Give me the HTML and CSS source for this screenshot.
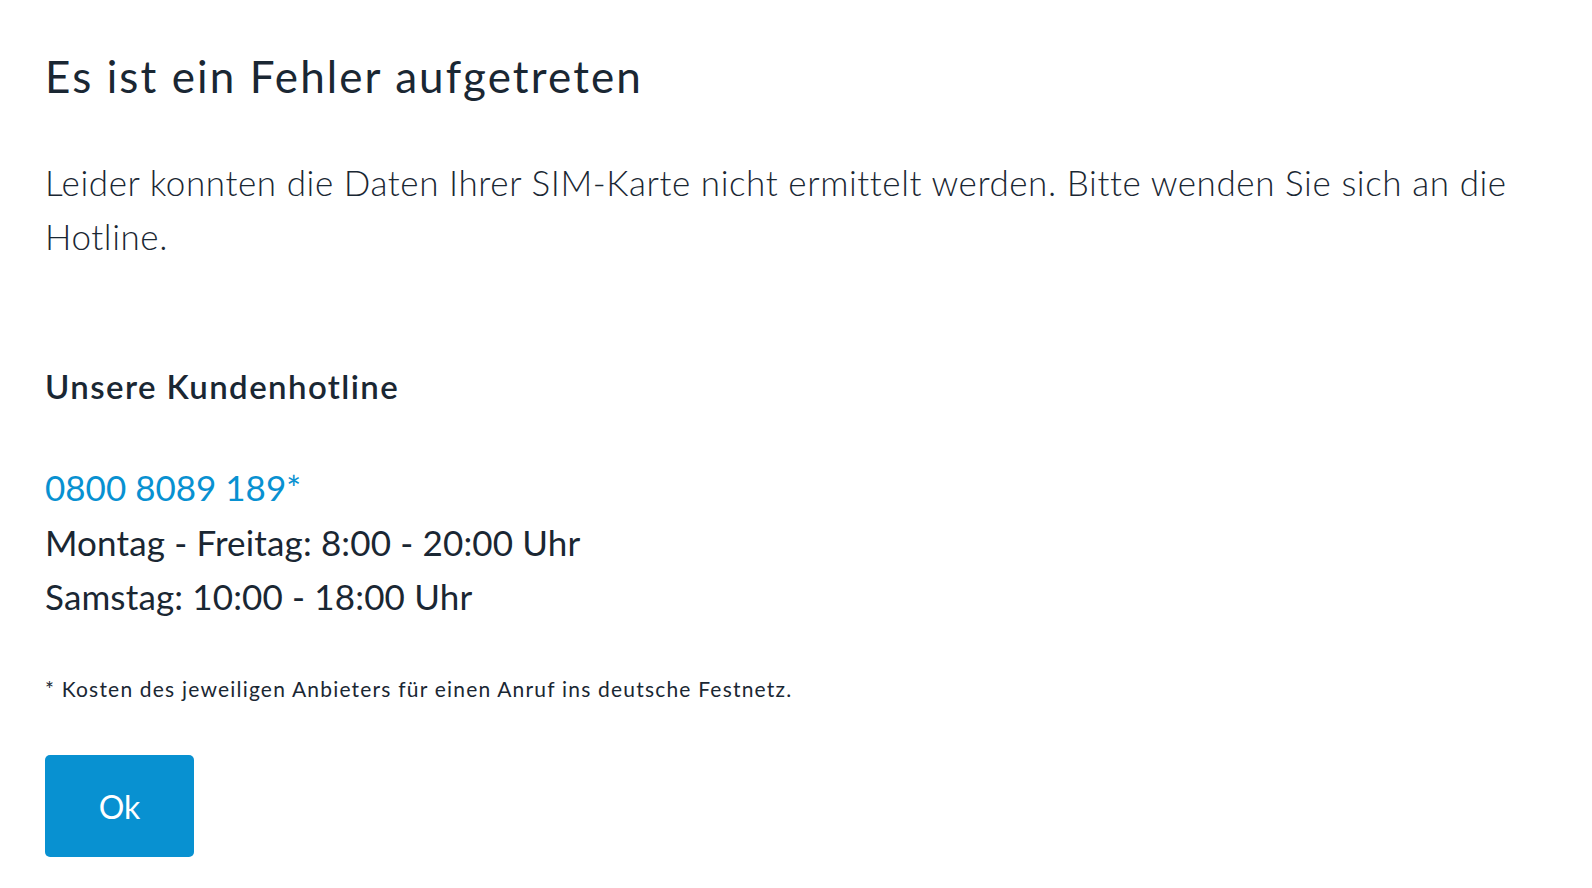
FILE: index.html
```html
<!DOCTYPE html>
<html lang="de">
<head>
<meta charset="utf-8">
<title>Fehler</title>
<link rel="stylesheet" href="styles.css">
</head>
<body>
<main class="dialog">
  <h1 class="title">Es ist ein Fehler aufgetreten</h1>
  <p class="message">Leider konnten die Daten Ihrer SIM-Karte nicht ermittelt werden. Bitte wenden Sie sich an die Hotline.</p>
  <h2 class="subtitle">Unsere Kundenhotline</h2>
  <div class="hotline">
    <a class="phone" href="#">0800 8089 189*</a>
    <div class="hours">Montag - Freitag: 8:00 - 20:00 Uhr</div>
    <div class="hours">Samstag: 10:00 - 18:00 Uhr</div>
  </div>
  <p class="footnote">* Kosten des jeweiligen Anbieters für einen Anruf ins deutsche Festnetz.</p>
  <button class="ok-button" type="button">Ok</button>
</main>
</body>
</html>
```
FILE: styles.css
```css
html, body {
  margin: 0;
  padding: 0;
  background: #ffffff;
}

body {
  font-family: "Lato", "Noto Sans", sans-serif;
  color: #1a2733;
}

.dialog {
  display: flex;
  flex-direction: column;
  align-items: flex-start;
  padding: 48px 45px 0 45px;
}

.title {
  margin: 0;
  font-size: 44px;
  line-height: 56px;
  font-weight: 400;
  letter-spacing: 2.1px;
}

.message {
  margin: 51px 0 0 0;
  font-size: 35px;
  line-height: 54px;
  font-weight: 300;
  letter-spacing: 0.58px;
}

.subtitle {
  margin: 101px 0 0 0;
  font-size: 33px;
  line-height: 44px;
  font-weight: 600;
  letter-spacing: 1.4px;
}

.hotline {
  margin-top: 52px;
  display: flex;
  flex-direction: column;
  font-size: 35px;
  line-height: 54px;
  font-weight: 400;
}

.phone {
  color: #0891d1;
  text-decoration: none;
}

.hours {
  letter-spacing: 0.15px;
  margin-top: 1px;
  margin-bottom: -1px;
}

.footnote {
  margin: 52px 0 0 0;
  font-size: 21px;
  line-height: 30px;
  font-weight: 400;
  letter-spacing: 1.2px;
}

.ok-button {
  margin-top: 51px;
  width: 149px;
  height: 102px;
  border: none;
  border-radius: 5px;
  background: #0891d1;
  color: #ffffff;
  font-family: "Lato", "Noto Sans", sans-serif;
  font-size: 32px;
  font-weight: 400;
  padding: 0;
}
```
